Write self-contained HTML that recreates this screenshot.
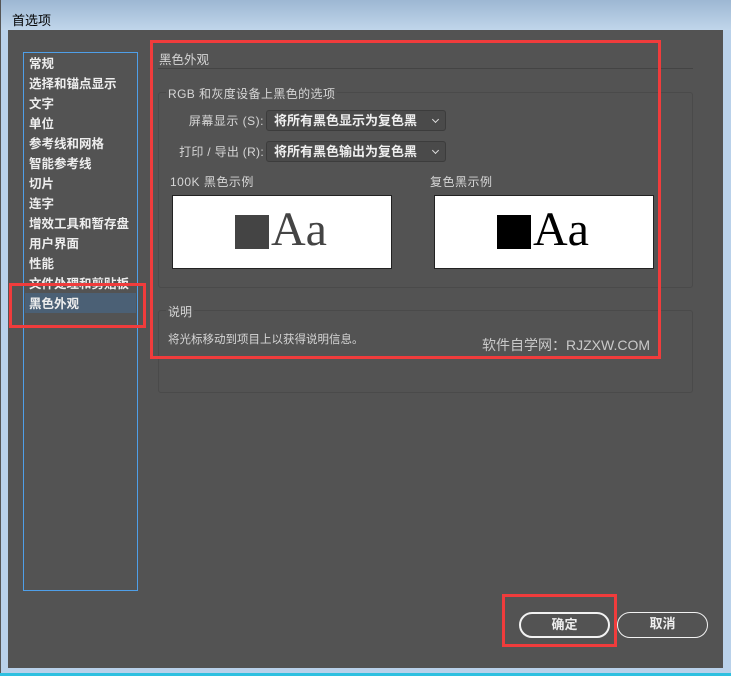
<!DOCTYPE html>
<html><head><meta charset="utf-8"><style>
*{margin:0;padding:0;box-sizing:border-box}
body{width:731px;height:676px;overflow:hidden;background:#b9d1ea;font-family:"Liberation Sans","Noto Sans CJK SC",sans-serif;position:relative}
.a{position:absolute}
.t{color:#d6d6d6;font-size:12px;line-height:14px;white-space:nowrap}
.li{position:absolute;left:29px;color:#eee;font-size:12.5px;font-weight:bold;line-height:14px}
.sel{background:#4a4a4a;border:1px solid #3c3c3c;border-radius:3px;color:#eee;font-size:13px;font-weight:bold;padding-left:7px;line-height:19px}
.sel:after{content:"";position:absolute;right:7px;top:6px;width:4px;height:4px;border-right:1.5px solid #ddd;border-bottom:1.5px solid #ddd;transform:rotate(45deg)}
.pv{background:#fff;border:1px solid #222}
.red{border:3px solid #f03c3c}
.btn{border:2px solid #f2f2f2;border-radius:13px;color:#eee;font-size:13px;font-weight:bold;text-align:center;line-height:22px}
</style></head><body>
<div class="a" style="left:0;top:0;width:731px;height:30px;background:linear-gradient(#9db7d3,#c0d5ea)"></div>
<div class="a" style="left:12px;top:10px;font-size:13px;color:#000">首选项</div>
<div class="a" style="left:0;top:0;width:1px;height:676px;background:#555"></div>
<div class="a" style="left:0;top:673px;width:731px;height:3px;background:#2ec0e0"></div>
<div class="a" style="left:8px;top:30px;width:715px;height:638px;background:#535353"></div>

<div class="a" style="left:23px;top:52px;width:115px;height:539px;border:1px solid #4f9fe8"></div>
<div class="a" style="left:25px;top:293px;width:111px;height:20px;background:#4b6075"></div>
<div class="li" style="top:57px">常规</div>
<div class="li" style="top:77px">选择和锚点显示</div>
<div class="li" style="top:97px">文字</div>
<div class="li" style="top:117px">单位</div>
<div class="li" style="top:137px">参考线和网格</div>
<div class="li" style="top:157px">智能参考线</div>
<div class="li" style="top:177px">切片</div>
<div class="li" style="top:197px">连字</div>
<div class="li" style="top:217px">增效工具和暂存盘</div>
<div class="li" style="top:237px">用户界面</div>
<div class="li" style="top:257px">性能</div>
<div class="li" style="top:277px">文件处理和剪贴板</div>
<div class="li" style="top:297px">黑色外观</div>

<div class="a t" style="left:159px;top:53px;font-size:12.5px">黑色外观</div>
<div class="a" style="left:158px;top:68px;width:535px;height:1px;background:#444"></div>
<div class="a" style="left:158px;top:92px;width:535px;height:196px;border:1px solid #4a4a4a;border-radius:3px"></div>
<div class="a t" style="left:166px;top:87px;background:#535353;padding:0 2px;letter-spacing:0.4px">RGB 和灰度设备上黑色的选项</div>
<div class="a t" style="left:160px;width:104px;text-align:right;top:114px;letter-spacing:0.5px">屏幕显示 (S):</div>
<div class="a sel" style="left:266px;top:110px;width:180px;height:21px">将所有黑色显示为复色黑</div>
<div class="a t" style="left:160px;width:104px;text-align:right;top:145px;letter-spacing:0.3px">打印 / 导出 (R):</div>
<div class="a sel" style="left:266px;top:141px;width:180px;height:21px">将所有黑色输出为复色黑</div>
<div class="a t" style="left:170px;top:175px;letter-spacing:0.5px">100K 黑色示例</div>
<div class="a t" style="left:430px;top:175px;letter-spacing:0.5px">复色黑示例</div>
<div class="a pv" style="left:172px;top:195px;width:220px;height:74px"></div>
<div class="a" style="left:235px;top:215px;width:34px;height:34px;background:#444"></div>
<div class="a" style="left:271px;top:205px;font-family:'Liberation Serif',serif;font-size:48px;line-height:50px;color:#444">Aa</div>
<div class="a pv" style="left:434px;top:195px;width:220px;height:74px"></div>
<div class="a" style="left:497px;top:215px;width:34px;height:34px;background:#000"></div>
<div class="a" style="left:533px;top:205px;font-family:'Liberation Serif',serif;font-size:48px;line-height:50px;color:#000">Aa</div>

<div class="a" style="left:158px;top:310px;width:535px;height:83px;border:1px solid #4a4a4a;border-radius:3px"></div>
<div class="a t" style="left:166px;top:305px;background:#535353;padding:0 2px">说明</div>
<div class="a t" style="left:168px;top:333px;font-size:11.5px">将光标移动到项目上以获得说明信息。</div>
<div class="a" style="left:482px;top:335px;font-size:14px;color:#c9c9c9;white-space:nowrap">软件自学网：RJZXW.COM</div>

<div class="a red" style="left:9px;top:283px;width:137px;height:45px"></div>
<div class="a red" style="left:150px;top:40px;width:511px;height:319px"></div>

<div class="a btn" style="left:519px;top:612px;width:91px;height:26px">确定</div>
<div class="a btn" style="left:617px;top:612px;width:91px;height:26px;border-width:1.5px">取消</div>
<div class="a red" style="left:502px;top:594px;width:115px;height:53px"></div>
</body></html>
